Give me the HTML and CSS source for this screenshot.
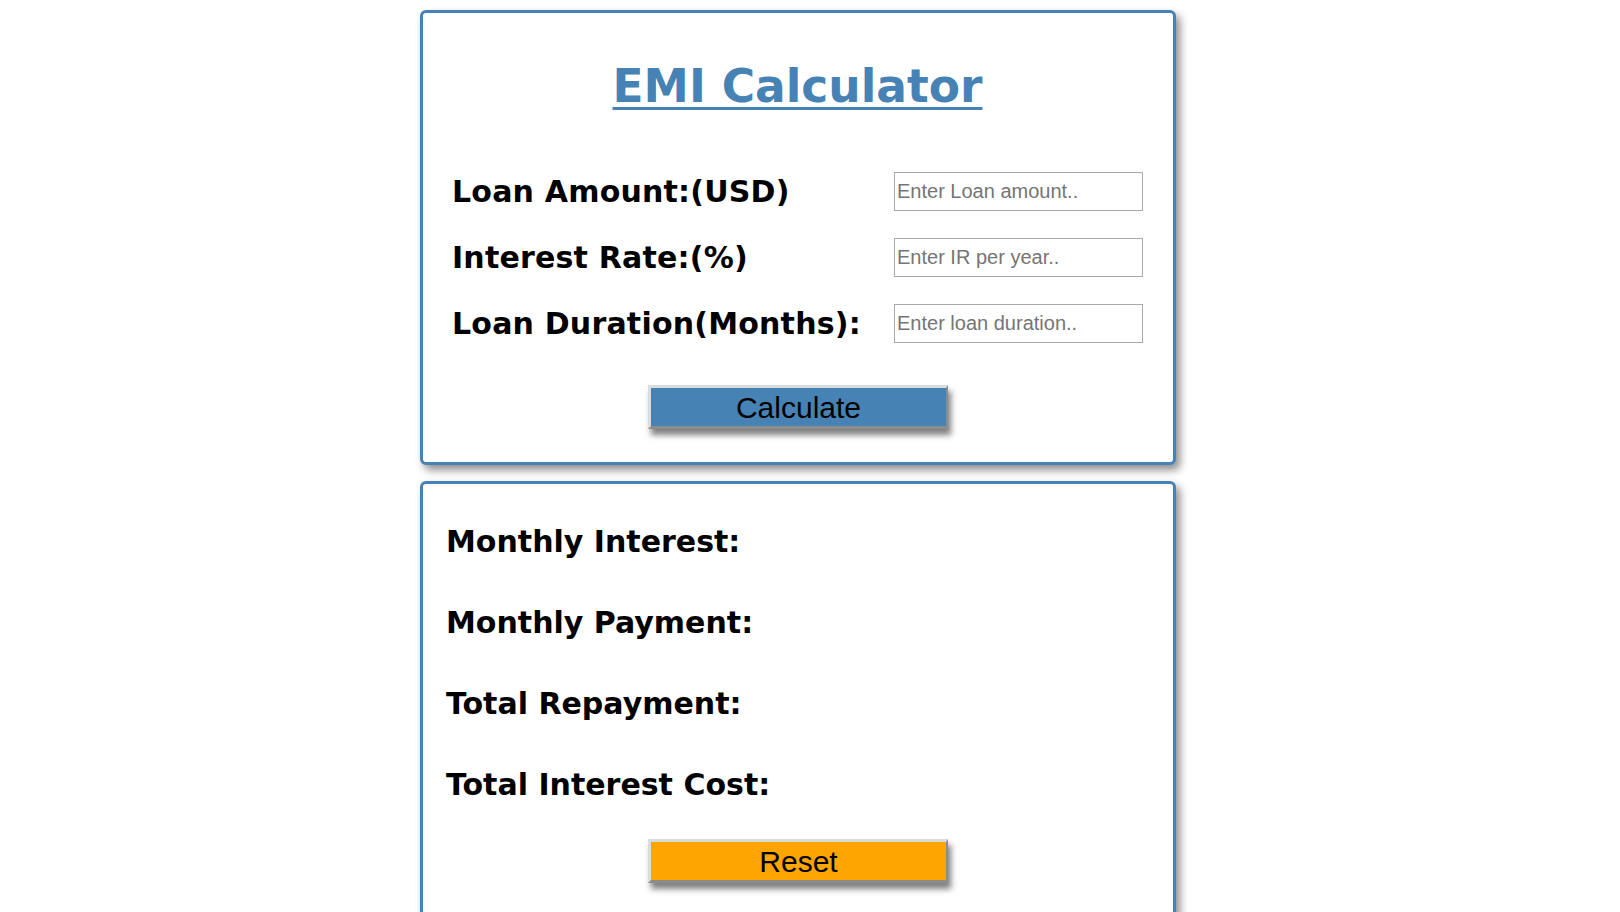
FILE: index.html
```html
<!DOCTYPE html>
<html lang="en">
<head>
<meta charset="utf-8">
<title>EMI Calculator</title>
<link rel="stylesheet" href="styles.css">
</head>
<body>
<main class="page">
  <section class="card calc-card">
    <h1 class="title">EMI Calculator</h1>
    <div class="form-grid">
      <label class="label" for="amount">Loan Amount:(USD)</label>
      <input class="field" id="amount" type="text" placeholder="Enter Loan amount..">
      <label class="label" for="rate">Interest Rate:(%)</label>
      <input class="field" id="rate" type="text" placeholder="Enter IR per year..">
      <label class="label" for="duration">Loan Duration(Months):</label>
      <input class="field" id="duration" type="text" placeholder="Enter loan duration..">
    </div>
    <div class="actions">
      <button class="btn btn-calc" type="button">Calculate</button>
    </div>
  </section>
  <section class="card result-card">
    <div class="results">
      <div class="result">Monthly Interest:</div>
      <div class="result">Monthly Payment:</div>
      <div class="result">Total Repayment:</div>
      <div class="result">Total Interest Cost:</div>
    </div>
    <div class="actions actions-reset">
      <button class="btn btn-reset" type="button">Reset</button>
    </div>
  </section>
</main>
</body>
</html>
```
FILE: styles.css
```css
html, body {
  margin: 0;
  padding: 0;
  background: #ffffff;
}

body {
  font-family: "DejaVu Sans", Verdana, sans-serif;
  color: #000;
  overflow: hidden;
  height: 912px;
}

.page {
  width: 756px;
  margin: 10px 0 0 420px;
  display: flex;
  flex-direction: column;
  gap: 16px;
}

.card {
  box-sizing: border-box;
  border: 3px solid #4682b4;
  border-radius: 6px;
  background: #fff;
  box-shadow: 4px 5px 8px rgba(0, 0, 0, 0.45);
}

.calc-card {
  padding: 48px 30px 33px 29px;
}

.title {
  margin: 0;
  text-align: center;
  font-size: 45.5px;
  font-weight: bold;
  line-height: 51px;
  color: #4682b4;
  text-decoration: underline;
  text-decoration-thickness: 3px;
  text-underline-offset: 5px;
}

.form-grid {
  margin-top: 60px;
  display: grid;
  grid-template-columns: 1fr 249px;
  grid-auto-rows: 39px;
  row-gap: 27px;
  align-items: center;
}

.label {
  font-size: 30px;
  font-weight: bold;
  line-height: normal;
  letter-spacing: 0.2px;
}

.field {
  box-sizing: border-box;
  width: 249px;
  height: 39px;
  margin: 0;
  padding: 1px 2px;
  border: 1px solid #a9a9a9;
  border-radius: 0;
  font-family: "Liberation Sans", Arial, sans-serif;
  font-size: 20px;
  color: #000;
  background: #fff;
  outline: none;
}

.field::placeholder {
  color: #757575;
  opacity: 1;
}

.actions {
  margin-top: 42px;
  display: flex;
  justify-content: center;
  padding-left: 1px;
}

.btn {
  box-sizing: border-box;
  width: 300px;
  height: 44px;
  margin: 0;
  padding: 2px 0 0;
  font-family: "Liberation Sans", Arial, sans-serif;
  font-size: 30px;
  color: #000;
  border-top: 3px solid #dcdcdc;
  border-left: 3px solid #dcdcdc;
  border-right: 2px solid #8c8c8c;
  border-bottom: 3px solid #8c8c8c;
  border-radius: 0;
  box-shadow: 3px 6px 6px rgba(0, 0, 0, 0.5);
  cursor: pointer;
}

.btn-calc {
  background: #4682b4;
}

.btn-reset {
  background: #ffa500;
}

.result-card {
  height: 460px;
  padding: 40px 30px 0 23px;
}

.results {
  display: flex;
  flex-direction: column;
  gap: 46px;
}

.result {
  font-size: 30px;
  font-weight: bold;
  line-height: normal;
}

.actions-reset {
  margin-top: 37px;
  padding-left: 7px;
}
```
